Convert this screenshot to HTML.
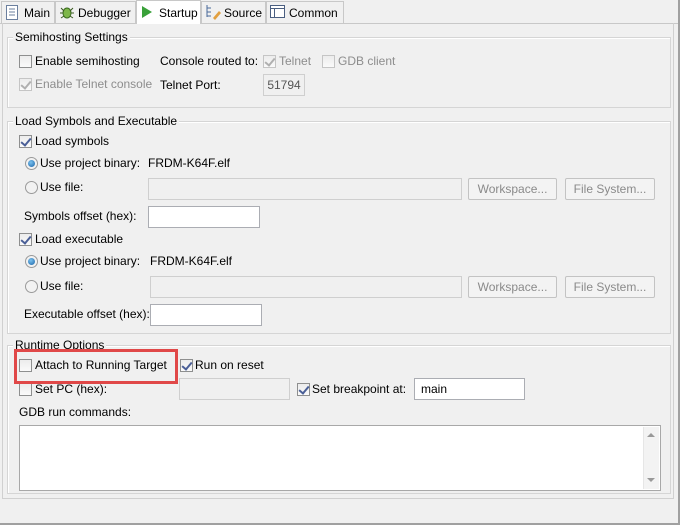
<!DOCTYPE html>
<html><head><style>
*{box-sizing:border-box;margin:0;padding:0}
body{width:680px;height:525px;background:#f0f0f0;font-family:"Liberation Sans",sans-serif;font-size:12px;color:#000;position:relative;overflow:hidden}
.a{position:absolute;white-space:nowrap}
.tab{position:absolute;top:1px;height:22px;border:1px solid #c8c8c8;border-bottom:none;background:#f0f0f0;padding:4px 0 0 22px}
.grp{position:absolute;left:7px;width:664px;border:1px solid #d5d5d5;box-shadow:inset 1px 1px 0 #fff}
.gt{position:absolute;background:#f0f0f0;padding:0 2px;white-space:nowrap}
.cb{position:absolute;width:13px;height:13px;border:1px solid #8e8f8f;background:linear-gradient(#ececec,#fafafa)}
.cb.dis{border-color:#c5c5c5}
.ck::after{content:"";position:absolute;left:3px;top:0px;width:4px;height:8px;border:solid #4a5f97;border-width:0 2px 2px 0;transform:rotate(40deg)}
.dis.ck::after{border-color:#b0b0b0}
.rb{position:absolute;width:13px;height:13px;border-radius:50%;border:1px solid #9a9a9a;background:#f2f2f2}
.rb.on::after{content:"";position:absolute;left:2px;top:2px;width:7px;height:7px;border-radius:50%;background:radial-gradient(circle at 40% 35%,#7ac1ee,#1b64a8)}
.in{position:absolute;height:22px;border:1px solid #abadb3;background:#fff}
.in.d{background:#f0f0f0;border-color:#cfcfcf}
.btn{position:absolute;height:22px;border:1px solid #c3c3c3;border-radius:2px;background:#f3f3f3;color:#8a8a8a;text-align:center;line-height:20px}
.g{color:#8d8d8d}
</style></head><body>
<div class="a" style="left:0;top:23px;width:680px;height:1px;background:#c8c8c8"></div>
<div class="tab" style="left:1px;width:54px">Main</div>
<div class="tab" style="left:55px;width:81px">Debugger</div>
<div class="tab" style="left:136px;top:0;height:24px;width:65px;background:#fff;padding-top:5px">Startup</div>
<div class="tab" style="left:201px;width:65px">Source</div>
<div class="tab" style="left:266px;width:78px">Common</div>
<!-- tab icons -->
<svg class="a" style="left:5px;top:5px" width="14" height="15"><rect x="1.5" y="0.5" width="11" height="14" fill="#fff" stroke="#6b7f9e"/><path d="M4 4h6M4 7h6M4 10h6" stroke="#6b7f9e"/></svg>
<svg class="a" style="left:59px;top:4px" width="16" height="16"><ellipse cx="8" cy="9" rx="4" ry="5" fill="#7eb74a" stroke="#3a6a20"/><path d="M2 4l3 3M14 4l-3 3M1 9h3M12 9h3M2 14l3-2M14 14l-3-2" stroke="#3a5a20"/></svg>
<svg class="a" style="left:141px;top:6px" width="12" height="12"><path d="M1 0L11 6L1 12Z" fill="#3aa13a"/></svg>
<svg class="a" style="left:205px;top:4px" width="16" height="16"><path d="M2 1v12M2 4h4M2 8h4M2 12h4" stroke="#4a6a9a"/><path d="M8 14l6-7 2 2-6 7z" fill="#e2a040"/></svg>
<svg class="a" style="left:270px;top:5px" width="15" height="13"><rect x="0.5" y="0.5" width="14" height="12" fill="#fff" stroke="#4a5e80"/><path d="M0.5 3.5h14M4.5 3.5v9" stroke="#4a5e80"/></svg>
<!-- outer panel -->
<div class="a" style="left:2px;top:23px;width:672px;height:476px;border:1px solid #d0d0d0;border-top:none"></div>
<div class="a" style="left:0;top:523px;width:680px;height:2px;background:#a0a0a0"></div>
<div class="a" style="left:678px;top:0;width:2px;height:525px;background:#a0a0a0"></div>

<!-- Semihosting -->
<div class="grp" style="top:37px;height:71px"></div>
<div class="gt" style="left:13px;top:30px">Semihosting Settings</div>
<div class="cb" style="left:19px;top:55px"></div><div class="a" style="left:35px;top:54px">Enable semihosting</div>
<div class="a" style="left:160px;top:54px">Console routed to:</div>
<div class="cb dis ck" style="left:263px;top:55px"></div><div class="a g" style="left:279px;top:54px">Telnet</div>
<div class="cb dis" style="left:322px;top:55px"></div><div class="a g" style="left:338px;top:54px">GDB client</div>
<div class="cb dis ck" style="left:19px;top:78px"></div><div class="a g" style="left:35px;top:77px">Enable Telnet console</div>
<div class="a" style="left:160px;top:78px">Telnet Port:</div>
<div class="in d" style="left:263px;top:74px;width:42px;text-align:center;line-height:20px;color:#555">51794</div>

<!-- Load -->
<div class="grp" style="top:121px;height:213px"></div>
<div class="gt" style="left:13px;top:114px">Load Symbols and Executable</div>
<div class="cb ck" style="left:19px;top:135px"></div><div class="a" style="left:35px;top:134px">Load symbols</div>
<div class="rb on" style="left:25px;top:157px"></div><div class="a" style="left:40px;top:156px">Use project binary:</div>
<div class="a" style="left:148px;top:156px">FRDM-K64F.elf</div>
<div class="rb" style="left:25px;top:181px"></div><div class="a" style="left:40px;top:180px">Use file:</div>
<div class="in d" style="left:148px;top:178px;width:314px"></div>
<div class="btn" style="left:468px;top:178px;width:89px">Workspace...</div>
<div class="btn" style="left:565px;top:178px;width:90px">File System...</div>
<div class="a" style="left:24px;top:209px">Symbols offset (hex):</div>
<div class="in" style="left:148px;top:206px;width:112px"></div>
<div class="cb ck" style="left:19px;top:233px"></div><div class="a" style="left:35px;top:232px">Load executable</div>
<div class="rb on" style="left:25px;top:255px"></div><div class="a" style="left:40px;top:254px">Use project binary:</div>
<div class="a" style="left:150px;top:254px">FRDM-K64F.elf</div>
<div class="rb" style="left:25px;top:280px"></div><div class="a" style="left:40px;top:279px">Use file:</div>
<div class="in d" style="left:150px;top:276px;width:312px"></div>
<div class="btn" style="left:468px;top:276px;width:89px">Workspace...</div>
<div class="btn" style="left:565px;top:276px;width:90px">File System...</div>
<div class="a" style="left:24px;top:307px">Executable offset (hex):</div>
<div class="in" style="left:150px;top:304px;width:112px"></div>

<!-- Runtime -->
<div class="grp" style="top:345px;height:149px"></div>
<div class="gt" style="left:13px;top:338px">Runtime Options</div>
<div class="cb" style="left:19px;top:359px"></div><div class="a" style="left:35px;top:358px">Attach to Running Target</div>
<div class="cb ck" style="left:180px;top:359px"></div><div class="a" style="left:195px;top:358px">Run on reset</div>
<div class="cb" style="left:19px;top:383px"></div><div class="a" style="left:35px;top:382px">Set PC (hex):</div>
<div class="in d" style="left:179px;top:378px;width:111px"></div>
<div class="cb ck" style="left:297px;top:383px"></div><div class="a" style="left:312px;top:382px">Set breakpoint at:</div>
<div class="in" style="left:414px;top:378px;width:111px;padding:3px 0 0 6px">main</div>
<div class="a" style="left:19px;top:405px">GDB run commands:</div>
<div class="in" style="left:19px;top:425px;width:642px;height:66px;border-color:#a8a8a8"></div>
<div class="a" style="left:643px;top:427px;width:16px;height:62px;background:#f3f3f3;border-left:1px solid #e6e6e6"></div>
<div class="a" style="left:647px;top:433px;width:0;height:0;border:4px solid transparent;border-bottom:4px solid #999;border-top:none"></div>
<div class="a" style="left:647px;top:478px;width:0;height:0;border:4px solid transparent;border-top:4px solid #999;border-bottom:none"></div>

<div class="a" style="left:14px;top:349px;width:164px;height:35px;border:3px solid #e04848"></div>
</body></html>
